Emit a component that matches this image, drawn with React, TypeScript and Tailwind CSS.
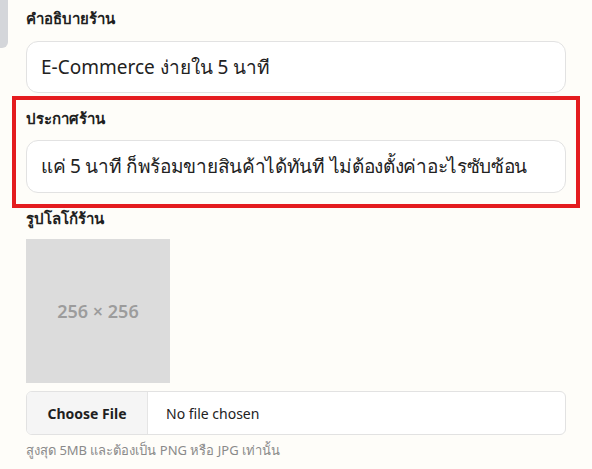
export default function App() {
  const font = { fontFamily: '"Noto Sans", "Liberation Sans", sans-serif' };
  return (
    <div className="w-[592px] h-[469px] bg-[#fefdf9] relative overflow-hidden" style={font}>
      <div className="absolute left-0 top-0 w-[8px] h-[48px] bg-[#d4d6da] rounded-br-[6px]" />
      <div className="flex flex-col px-[26px] pt-[8px]">
        <label className="text-[15px] leading-[20px] font-bold text-[#1f1f1f]">คำอธิบายร้าน</label>
        <div className="mt-[13px] h-[52px] rounded-[12px] border border-[#e2e2e2] bg-white flex items-center px-[14px] text-[19px] text-[#222]">
          E-Commerce ง่ายใน 5 นาที
        </div>
        <div className="mt-[3px] -mx-[14px] border-4 border-[#e41c1f] px-[10px] pt-[8px] pb-[11px] flex flex-col">
          <label className="text-[15px] leading-[20px] font-bold text-[#1f1f1f]">ประกาศร้าน</label>
          <div className="mt-[12px] h-[53px] rounded-[12px] border border-[#e2e2e2] bg-white flex items-center px-[14px] text-[19px] tracking-[-0.3px] text-[#222] whitespace-nowrap overflow-hidden">
            แค่ 5 นาที ก็พร้อมขายสินค้าได้ทันที ไม่ต้องตั้งค่าอะไรซับซ้อน
          </div>
        </div>
        <label className="text-[15px] leading-[20px] font-bold text-[#1f1f1f]">รูปโลโก้ร้าน</label>
        <div className="mt-[11px] w-[144px] h-[144px] bg-[#dcdcdc] flex items-center justify-center text-[#9c9c9c] text-[18px] font-semibold">
          256 × 256
        </div>
        <div className="mt-[8px] h-[44px] rounded-[6px] border border-[#e2e2e2] bg-white flex overflow-hidden">
          <div className="w-[121px] bg-[#f5f5f5] border-r border-[#e5e5e5] flex items-center justify-center text-[14px] font-bold text-[#1f1f1f]">
            Choose File
          </div>
          <div className="flex items-center pl-[18px] text-[14px] text-[#222]">No file chosen</div>
        </div>
        <div className="mt-[7px] text-[13px] leading-[16px] text-[#8a8a8a]">สูงสุด 5MB และต้องเป็น PNG หรือ JPG เท่านั้น</div>
      </div>
    </div>
  );
}
